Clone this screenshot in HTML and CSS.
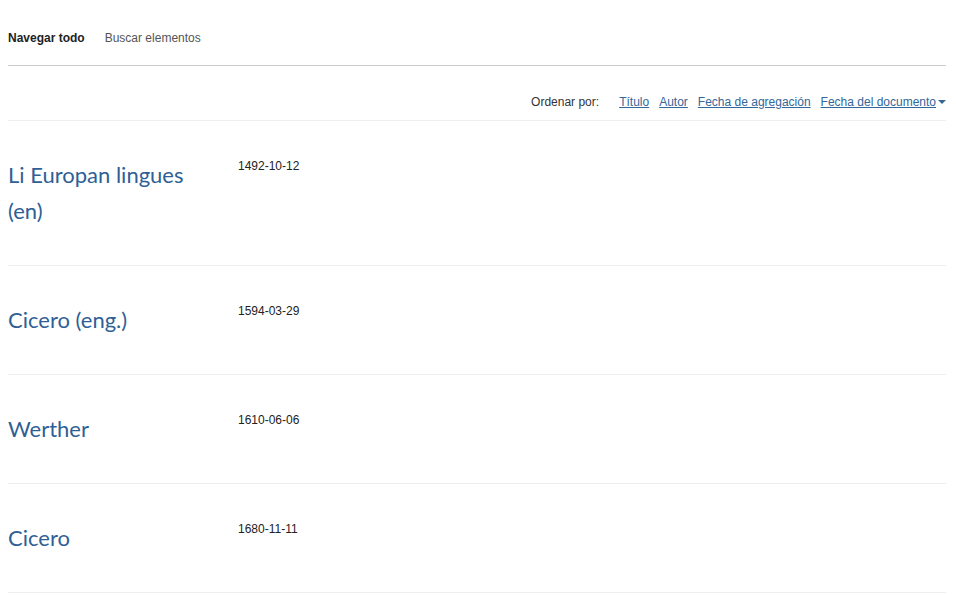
FILE: index.html
```html
<!DOCTYPE html>
<html>
	<head>
		<meta charset="utf-8">
		<title>Navegar todo</title>
	<link rel="stylesheet" href="styles.css">
	</head>
	<body>
	<div class="page">
		<div class="tabs">
			<a href="javascript:;" class="tab active">Navegar todo</a>
			<a href="javascript:;" class="tab">Buscar elementos</a>
		</div>
		<div class="sort">
			<span class="sortLabel">Ordenar por:</span>
			<a href="javascript:;">Título</a>
			<a href="javascript:;">Autor</a>
			<a href="javascript:;">Fecha de agregación</a>
			<a href="javascript:;" class="current">Fecha del documento<span class="caret"></span></a>
		</div>
		<div class="list">
			<div class="item">
				<a href="javascript:;" class="title">Li Europan lingues (en)</a>
				<span class="date">1492-10-12</span>
			</div>
			<div class="item">
				<a href="javascript:;" class="title">Cicero (eng.)</a>
				<span class="date">1594-03-29</span>
			</div>
			<div class="item">
				<a href="javascript:;" class="title">Werther</a>
				<span class="date">1610-06-06</span>
			</div>
			<div class="item">
				<a href="javascript:;" class="title">Cicero</a>
				<span class="date">1680-11-11</span>
			</div>
		</div>
	</div>
	</body>
</html>
```
FILE: styles.css
```css
body{
	margin: 0;
	background: #fff;
	font-family: "Liberation Sans", Arial, sans-serif;
	font-size: 12px;
	color: #222;
}
.page{
	margin: 0 10px 0 8px;
}
.tabs{
	display: flex;
	gap: 20px;
	padding-top: 30px;
	height: 35px;
	border-bottom: 1px solid #ccc;
}
.tab{
	color: #555;
	text-decoration: none;
	line-height: 16px;
}
.tab.active{
	color: #222;
	font-weight: bold;
}
.sort{
	display: flex;
	justify-content: flex-end;
	align-items: flex-start;
	gap: 10px;
	padding-top: 28px;
	height: 26px;
	line-height: 16px;
	border-bottom: 1px solid #eee;
}
.sortLabel{
	margin-right: 10px;
	color: #333;
}
.sort a{
	color: #336699;
	text-decoration: underline;
}
.caret{
	display: inline-block;
	width: 0;
	height: 0;
	margin-left: 2px;
	vertical-align: 2px;
	border-left: 4px solid transparent;
	border-right: 4px solid transparent;
	border-top: 4px solid #336699;
}
.item{
	display: flex;
	padding: 36px 0 36px;
	border-bottom: 1px solid #eee;
}
.title{
	width: 200px;
	margin-right: 30px;
	font-family: Lato, "Open Sans", sans-serif;
	font-size: 22px;
	line-height: 36px;
	color: #2f5f94;
	text-decoration: none;
}
.date{
	margin-top: 1px;
	color: #222;
	line-height: 16px;
}
```
